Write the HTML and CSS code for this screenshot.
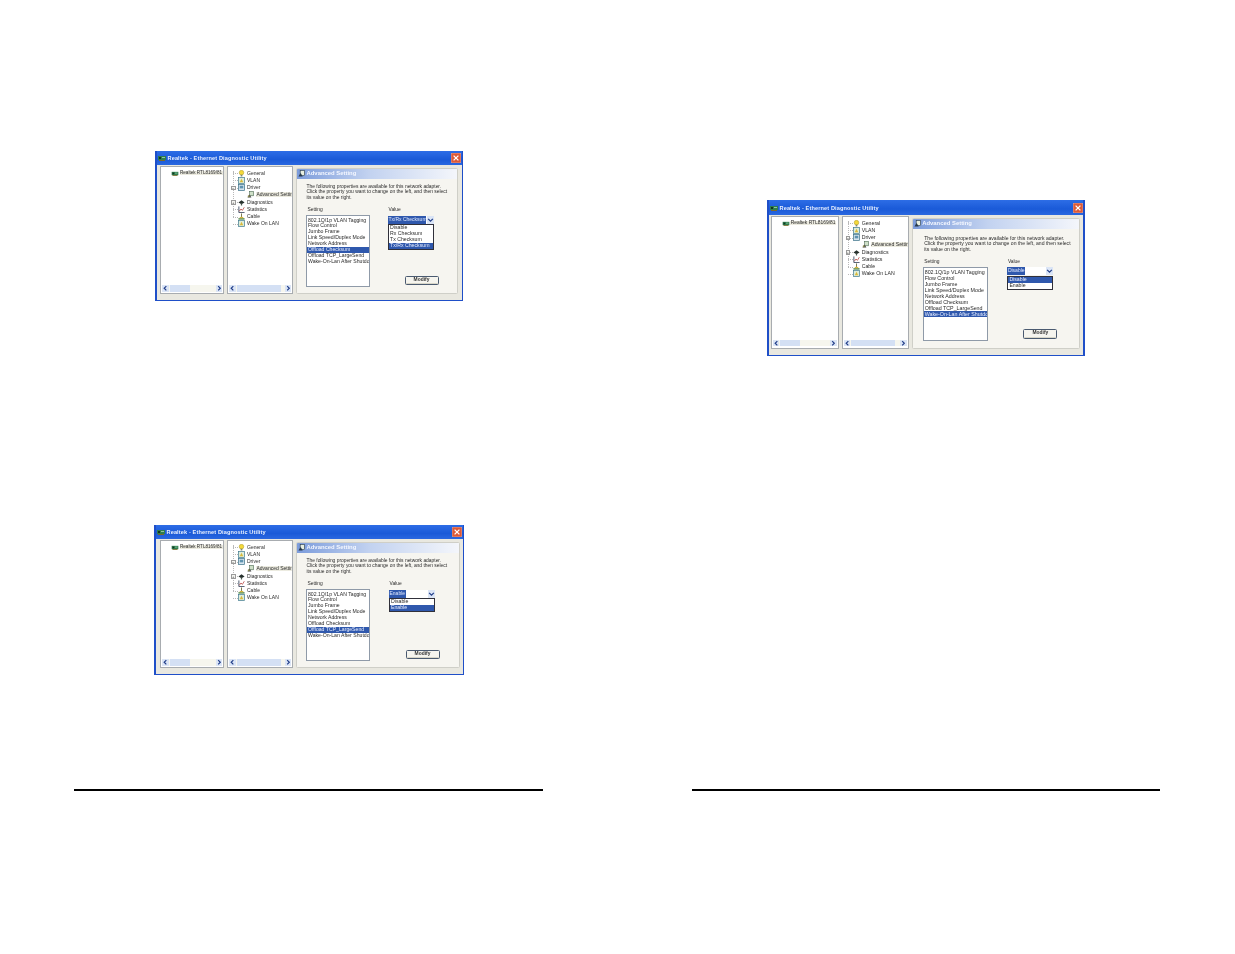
FILE: index.html
```html
<!DOCTYPE html>
<html lang="en">
<head>
<meta charset="utf-8">
<title>Realtek Ethernet Diagnostic Utility</title>
<link rel="stylesheet" href="styles.css">
</head>
<body>
<svg class="defs" width="0" height="0">
  <symbol id="nic" viewBox="0 0 8 6"><rect y="1" width="8" height="4" fill="#2f7d4f"/><rect x="1" y="2" width="2" height="2" fill="#12351f"/><rect x="4" y="2" width="3" height="1" fill="#8fc7a0"/><rect x="1" y="5" width="6" height="1" fill="#7a6a2a"/></symbol>
  <symbol id="bulb" viewBox="0 0 8 8"><circle cx="4" cy="3" r="2.6" fill="#f4d93a" stroke="#a08a10" stroke-width=".5"/><rect x="3" y="5.4" width="2" height="2" fill="#7f8a70"/></symbol>
  <symbol id="box" viewBox="0 0 8 8"><rect x=".5" y=".5" width="7" height="7" fill="#dfeeda" stroke="#3f7a90" stroke-width=".8"/><path d="M2 6 4 2l2 4z" fill="#d9b93a"/></symbol>
  <symbol id="driver" viewBox="0 0 8 8"><rect x=".5" y=".5" width="7" height="7" fill="#d5e4ee" stroke="#3a6f88" stroke-width=".8"/><rect x="2" y="2" width="4" height="3" fill="#5f93b0"/></symbol>
  <symbol id="adv" viewBox="0 0 8 8"><rect x="3" y=".5" width="4.5" height="5" fill="#cfe0c8" stroke="#3a5a40" stroke-width=".6"/><path d="M.5 7.5 3 4l2 3.5z" fill="#444"/><circle cx="2" cy="6" r="1.2" fill="#8a8a50"/></symbol>
  <symbol id="diag" viewBox="0 0 8 8"><path d="M.5 4 4 1.5 7.5 4 4 6z" fill="#26302c"/><rect x="3.3" y="5" width="1.4" height="2.4" fill="#4c5a50"/></symbol>
  <symbol id="stats" viewBox="0 0 8 8"><path d="M1 .5v7h6.5" fill="none" stroke="#22304a" stroke-width=".9"/><path d="M1.5 6 3.4 3.4 5 5l2.2-3.6" fill="none" stroke="#b0302c" stroke-width=".8"/></symbol>
  <symbol id="cable" viewBox="0 0 8 8"><path d="M4 .5v4" stroke="#5a5a20" stroke-width=".9"/><path d="M.5 6h7v1.5h-7z" fill="#3d7d3d"/><path d="M2 4.5h4V6H2z" fill="#d8b43a"/></symbol>
  <symbol id="head" viewBox="0 0 8 8"><rect x="2.5" y=".5" width="5" height="6" fill="#e8efe0" stroke="#26384a" stroke-width=".7"/><path d="M.5 7.5 3 3.5l2.4 4z" fill="#26384a"/></symbol>
  <symbol id="close" viewBox="0 0 10 10"><rect width="10" height="10" rx="1.2" fill="#dd5a38" stroke="#f0d8d0" stroke-width=".5"/><path d="M2.6 2.6l4.8 4.8M7.4 2.6 2.6 7.4" stroke="#fff" stroke-width="1.3"/></symbol>
  <symbol id="left" viewBox="0 0 6 6"><path d="M4 1 2 3l2 2" fill="none" stroke="#24408a" stroke-width="1.1"/></symbol>
  <symbol id="right" viewBox="0 0 6 6"><path d="M2 1l2 2-2 2" fill="none" stroke="#24408a" stroke-width="1.1"/></symbol>
  <symbol id="down" viewBox="0 0 6 6"><path d="M1 2l2 2 2-2" fill="none" stroke="#24408a" stroke-width="1.1"/></symbol>
</svg>

<main class="sheet">
  <section class="page page-left">
    <div class="win win-a">
      <header class="title"><svg class="title-icon"><use href="#nic"/></svg><span class="title-text">Realtek - Ethernet Diagnostic Utility</span><svg class="close"><use href="#close"/></svg></header>
      <div class="body">
        <div class="pane pane-adapter">
          <div class="pane-fill"><div class="adapter"><svg class="ic"><use href="#nic"/></svg><span class="sel-soft">Realtek RTL8169/81</span></div></div>
          <div class="sbar"><span class="arrow"><svg><use href="#left"/></svg></span><span class="thumb"></span><span class="arrow"><svg><use href="#right"/></svg></span></div>
        </div>
        <div class="pane pane-tree">
          <ul class="tree">
            <li class="row"><svg class="ic"><use href="#bulb"/></svg>General</li>
            <li class="row"><svg class="ic"><use href="#box"/></svg>VLAN</li>
            <li class="row"><i class="exp">−</i><svg class="ic"><use href="#driver"/></svg>Driver</li>
            <li class="row row-child"><svg class="ic"><use href="#adv"/></svg><span class="sel-soft">Advanced Settin</span></li>
            <li class="row"><i class="exp">+</i><svg class="ic"><use href="#diag"/></svg>Diagnostics</li>
            <li class="row"><svg class="ic"><use href="#stats"/></svg>Statistics</li>
            <li class="row"><svg class="ic"><use href="#cable"/></svg>Cable</li>
            <li class="row"><svg class="ic"><use href="#box"/></svg>Wake On LAN</li>
          </ul>
          <div class="sbar"><span class="arrow"><svg><use href="#left"/></svg></span><span class="thumb"></span><span class="arrow"><svg><use href="#right"/></svg></span></div>
        </div>
        <div class="panel">
          <div class="band"><svg class="ic ic-head"><use href="#head"/></svg>Advanced Setting</div>
          <p class="intro">The following properties are available for this network adapter.<br>Click the property you want to change on the left, and then select<br>its value on the right.</p>
          <div class="fields">
            <div class="field-set">
              <div class="label">Setting</div>
              <ul class="list">
                <li>802.1Q/1p VLAN Tagging</li><li>Flow Control</li><li>Jumbo Frame</li><li>Link Speed/Duplex Mode</li><li>Network Address</li><li class="on">Offload Checksum</li><li>Offload TCP_LargeSend</li><li>Wake-On-Lan After Shutdo</li>
              </ul>
            </div>
            <div class="field-val">
              <div class="label">Value</div>
              <div class="combo"><span class="combo-val">Tx/Rx Checksum</span><span class="combo-btn"><svg><use href="#down"/></svg></span></div>
              <ul class="drop">
                <li>Disable</li><li>Rx Checksum</li><li>Tx Checksum</li><li class="on">Tx/Rx Checksum</li>
              </ul>
              <button class="modify">Modify</button>
            </div>
          </div>
        </div>
      </div>
    </div>

    <div class="win win-b">
      <header class="title"><svg class="title-icon"><use href="#nic"/></svg><span class="title-text">Realtek - Ethernet Diagnostic Utility</span><svg class="close"><use href="#close"/></svg></header>
      <div class="body">
        <div class="pane pane-adapter">
          <div class="pane-fill"><div class="adapter"><svg class="ic"><use href="#nic"/></svg><span class="sel-soft">Realtek RTL8169/81</span></div></div>
          <div class="sbar"><span class="arrow"><svg><use href="#left"/></svg></span><span class="thumb"></span><span class="arrow"><svg><use href="#right"/></svg></span></div>
        </div>
        <div class="pane pane-tree">
          <ul class="tree">
            <li class="row"><svg class="ic"><use href="#bulb"/></svg>General</li>
            <li class="row"><svg class="ic"><use href="#box"/></svg>VLAN</li>
            <li class="row"><i class="exp">−</i><svg class="ic"><use href="#driver"/></svg>Driver</li>
            <li class="row row-child"><svg class="ic"><use href="#adv"/></svg><span class="sel-soft">Advanced Settin</span></li>
            <li class="row"><i class="exp">+</i><svg class="ic"><use href="#diag"/></svg>Diagnostics</li>
            <li class="row"><svg class="ic"><use href="#stats"/></svg>Statistics</li>
            <li class="row"><svg class="ic"><use href="#cable"/></svg>Cable</li>
            <li class="row"><svg class="ic"><use href="#box"/></svg>Wake On LAN</li>
          </ul>
          <div class="sbar"><span class="arrow"><svg><use href="#left"/></svg></span><span class="thumb"></span><span class="arrow"><svg><use href="#right"/></svg></span></div>
        </div>
        <div class="panel">
          <div class="band"><svg class="ic ic-head"><use href="#head"/></svg>Advanced Setting</div>
          <p class="intro">The following properties are available for this network adapter.<br>Click the property you want to change on the left, and then select<br>its value on the right.</p>
          <div class="fields">
            <div class="field-set">
              <div class="label">Setting</div>
              <ul class="list">
                <li>802.1Q/1p VLAN Tagging</li><li>Flow Control</li><li>Jumbo Frame</li><li>Link Speed/Duplex Mode</li><li>Network Address</li><li>Offload Checksum</li><li class="on">Offload TCP_LargeSend</li><li>Wake-On-Lan After Shutdo</li>
              </ul>
            </div>
            <div class="field-val">
              <div class="label">Value</div>
              <div class="combo"><span class="combo-val">Enable</span><span class="combo-btn"><svg><use href="#down"/></svg></span></div>
              <ul class="drop">
                <li>Disable</li><li class="on">Enable</li>
              </ul>
              <button class="modify">Modify</button>
            </div>
          </div>
        </div>
      </div>
    </div>
    <hr class="rule">
  </section>

  <section class="page page-right">
    <div class="win win-c">
      <header class="title"><svg class="title-icon"><use href="#nic"/></svg><span class="title-text">Realtek - Ethernet Diagnostic Utility</span><svg class="close"><use href="#close"/></svg></header>
      <div class="body">
        <div class="pane pane-adapter">
          <div class="pane-fill"><div class="adapter"><svg class="ic"><use href="#nic"/></svg><span class="sel-soft">Realtek RTL8169/81</span></div></div>
          <div class="sbar"><span class="arrow"><svg><use href="#left"/></svg></span><span class="thumb"></span><span class="arrow"><svg><use href="#right"/></svg></span></div>
        </div>
        <div class="pane pane-tree">
          <ul class="tree">
            <li class="row"><svg class="ic"><use href="#bulb"/></svg>General</li>
            <li class="row"><svg class="ic"><use href="#box"/></svg>VLAN</li>
            <li class="row"><i class="exp">−</i><svg class="ic"><use href="#driver"/></svg>Driver</li>
            <li class="row row-child"><svg class="ic"><use href="#adv"/></svg><span class="sel-soft">Advanced Settin</span></li>
            <li class="row"><i class="exp">+</i><svg class="ic"><use href="#diag"/></svg>Diagnostics</li>
            <li class="row"><svg class="ic"><use href="#stats"/></svg>Statistics</li>
            <li class="row"><svg class="ic"><use href="#cable"/></svg>Cable</li>
            <li class="row"><svg class="ic"><use href="#box"/></svg>Wake On LAN</li>
          </ul>
          <div class="sbar"><span class="arrow"><svg><use href="#left"/></svg></span><span class="thumb"></span><span class="arrow"><svg><use href="#right"/></svg></span></div>
        </div>
        <div class="panel">
          <div class="band"><svg class="ic ic-head"><use href="#head"/></svg>Advanced Setting</div>
          <p class="intro">The following properties are available for this network adapter.<br>Click the property you want to change on the left, and then select<br>its value on the right.</p>
          <div class="fields">
            <div class="field-set">
              <div class="label">Setting</div>
              <ul class="list">
                <li>802.1Q/1p VLAN Tagging</li><li>Flow Control</li><li>Jumbo Frame</li><li>Link Speed/Duplex Mode</li><li>Network Address</li><li>Offload Checksum</li><li>Offload TCP_LargeSend</li><li class="on">Wake-On-Lan After Shutdo</li>
              </ul>
            </div>
            <div class="field-val">
              <div class="label">Value</div>
              <div class="combo"><span class="combo-val">Disable</span><span class="combo-btn"><svg><use href="#down"/></svg></span></div>
              <ul class="drop drop-dark">
                <li class="on">Disable</li><li>Enable</li>
              </ul>
              <button class="modify">Modify</button>
            </div>
          </div>
        </div>
      </div>
    </div>
    <hr class="rule">
  </section>
</main>
</body>
</html>
```

FILE: styles.css
```css
* { box-sizing: border-box; }
html, body { margin: 0; padding: 0; background: #fff; }
body { font-family: "Liberation Sans", Arial, sans-serif; color: #2a2a2a; }
ul { list-style: none; margin: 0; padding: 0; }
.defs { display: block; height: 0; }

.sheet { width: 1235px; height: 954px; display: grid; grid-template-columns: 469px 468px; column-gap: 149px; padding-left: 74px; overflow: hidden; }
.page { display: flex; flex-direction: column; height: 954px; }
.rule { margin: 0; height: 2px; border: 0; background: #000; }
.page-left .rule { margin-top: 114px; }
.page-right .rule { margin-top: 433px; }

.win { display: flex; flex-direction: column; flex: none; background: #1f4fc8; padding: 0 1.5px 1.5px; filter: blur(.42px); overflow: hidden; }
.win-a { width: 308px; height: 150px; margin: 151px 0 0 81px; }
.win-b { width: 310px; height: 150px; margin: 224px 0 0 80px; }
.win-c { width: 317.5px; height: 156px; margin: 200px 0 0 75px; }

.title { flex: none; height: 14px; display: flex; align-items: center; padding: 0 .5px 0 1.5px; background: linear-gradient(#2d6de6, #1a5ad8 60%, #2a68e0); color: #e8f0ff; font-size: 5.6px; font-weight: 700; letter-spacing: .12px; }
.win-c .title { height: 15px; }
.title-icon { width: 8px; height: 6px; margin-right: 1.5px; flex: none; }
.title-text { flex: 1; white-space: nowrap; }
.close { width: 10px; height: 10px; flex: none; }

.body { flex: 1; min-height: 0; display: flex; gap: 3px; padding: 1px 3.2px 5.5px 3.5px; background: #e9e8e0; font-size: 5px; line-height: 1; }
.win-b .body { padding: 1px 2.5px 5.5px 4.5px; }
.win-c .body { padding: 1px 3px 6px 2.2px; font-size: 5.2px; }
.pane { flex: none; display: flex; flex-direction: column; background: #fff; border: .7px solid #a8acb0; min-height: 0; overflow: hidden; }
.pane-adapter { width: 64px; }
.pane-tree { width: 66px; }
.win-c .pane-adapter { width: 68px; }
.win-c .pane-tree { width: 67px; }
.pane-fill { flex: 1; min-height: 0; }

.adapter { display: flex; align-items: center; white-space: nowrap; padding: 3px 0 0 10px; height: 9px; font-size: 4.6px; }
.win-c .adapter { font-size: 4.9px; }
.adapter .ic { width: 8px; height: 5px; margin-right: .5px; flex: none; }
.sel-soft { background: #ecebe0; padding: 0 .5px; white-space: nowrap; }

.tree { flex: 1; min-height: 0; padding-top: 2.5px; position: relative; }
.tree::before { content: ""; position: absolute; left: 5.4px; top: 4px; height: 46px; border-left: .5px dotted #b8b8b8; }
.row { height: 7.25px; display: flex; align-items: center; padding-left: 10px; white-space: nowrap; position: relative; }
.row::before { content: ""; position: absolute; left: 5.4px; top: 3.6px; width: 4.5px; border-top: .5px dotted #b8b8b8; }
.row .ic { width: 7px; height: 7px; margin-right: 2px; flex: none; position: relative; }
.row-child { padding-left: 19px; }
.row-child::before { display: none; }
.exp { position: absolute; left: 3px; top: 1.5px; width: 4.5px; height: 4.5px; border: .5px solid #9a9a9a; background: #f4f4f0; font-style: normal; font-size: 4px; line-height: 3.4px; text-align: center; color: #333; z-index: 1; }

.sbar { flex: none; height: 6.5px; margin: 0 1px 1.5px; display: flex; background: #f6f6ee; }
.arrow { flex: none; width: 6.5px; height: 6.5px; background: #dbe5f6; display: block; }
.arrow svg { display: block; width: 6.5px; height: 6.5px; }
.arrow:last-child { margin-left: auto; }
.thumb { width: 20px; background: #d4e0f4; margin-left: 1px; }
.pane-tree .thumb { width: 44px; }

.panel { flex: 1; min-width: 0; margin-top: 1.5px; display: flex; flex-direction: column; background: #f6f5f0; border: .7px solid #cfcfc8; border-radius: 1.5px; overflow: hidden; }
.band { flex: none; height: 10px; display: flex; align-items: center; padding-left: 1px; background: linear-gradient(90deg, #7c9cdb, #c2d2f0 45%, #f4f6fb); color: #f4f7ff; font-size: 5.9px; font-weight: 700; }
.ic-head { width: 7px; height: 7px; margin-right: 1.5px; flex: none; }
.intro { margin: 5px 0 0 9.5px; font-size: 4.9px; line-height: 5.7px; white-space: nowrap; }
.win-c .intro { margin: 7px 0 0 11.5px; font-size: 5.1px; line-height: 5.85px; }

.fields { flex: 1; display: grid; grid-template-columns: 82px 1fr; padding: 6.5px 0 0 9px; min-height: 0; }
.win-b .fields { grid-template-columns: 83px 1fr; }
.win-c .fields { grid-template-columns: 84.7px 1fr; padding: 5.5px 0 0 10px; }
.label { height: 6px; font-size: 4.9px; line-height: 6px; padding-left: 1.5px; }
.field-val .label { padding-left: .5px; }
.list { margin-top: 2px; width: 63.5px; height: 71.5px; background: #fff; border: .7px solid #8f9aa8; padding-top: 1.5px; font-size: 5.15px; line-height: 5.86px; white-space: nowrap; overflow: hidden; }
.list li { padding-left: 1px; height: 5.86px; }
.win-c .list { width: 65px; height: 74px; font-size: 5.3px; line-height: 6.05px; }
.win-c .list li { height: 6.05px; }
.on { background: #2f58ad; color: #e8eeff; }

.field-val { display: flex; flex-direction: column; align-items: flex-start; }
.combo { margin-top: 2.5px; width: 46px; height: 8px; display: flex; background: #fff; align-items: stretch; }
.combo-val { flex: none; background: #2f58ad; color: #dfe8ff; padding: 1.4px .5px 0; font-size: 5px; line-height: 5px; max-width: 38px; white-space: nowrap; }
.combo-btn { margin-left: auto; width: 7px; background: #dbe5f6; }
.combo-btn svg { display: block; width: 7px; height: 8px; }
.drop { margin-top: .7px; width: 46px; background: #fff; border: .5px solid #30303a; font-size: 5.2px; line-height: 5.9px; }
.drop li { padding-left: 1px; height: 5.9px; white-space: nowrap; }
.drop-dark { border-width: .7px; }
.modify { margin: auto 0 8px 16.5px; width: 34px; height: 9px; padding: 0; background: #f5f4ee; border: .8px solid #4a5a70; border-radius: 1.5px; font: 700 4.9px/1 "Liberation Sans", Arial, sans-serif; color: #333; box-shadow: inset 0 -1px 0 #d8d6c8; }
.win-c .modify { height: 10px; margin: auto 0 9px 16px; }
```
